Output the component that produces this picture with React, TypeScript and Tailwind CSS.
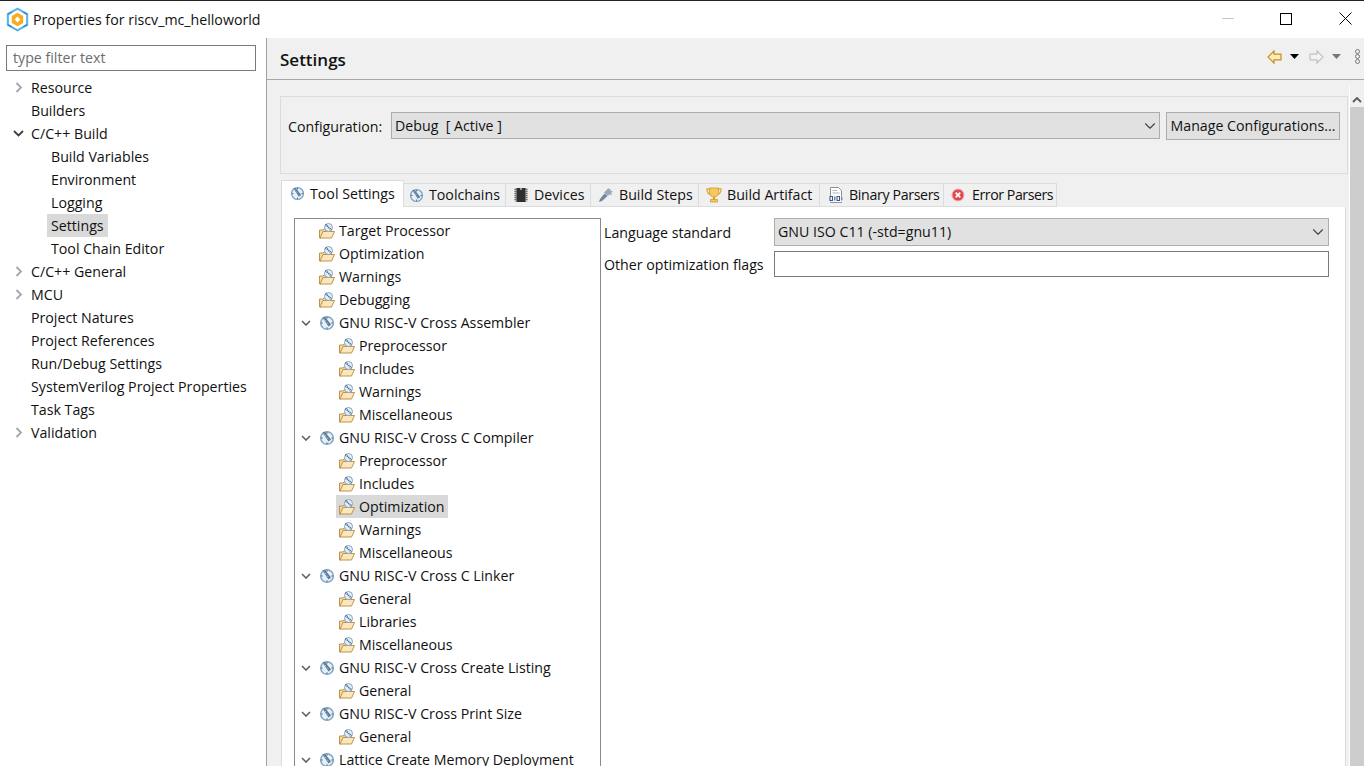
import { ChevronDown } from "lucide-react";

const font = { fontFamily: '"Open Sans", "Noto Sans", sans-serif' };

// 左側のナビゲーション
const navItems = [
  { label: "Resource", indent: 0, arrow: "closed" },
  { label: "Builders", indent: 0 },
  { label: "C/C++ Build", indent: 0, arrow: "open" },
  { label: "Build Variables", indent: 1 },
  { label: "Environment", indent: 1 },
  { label: "Logging", indent: 1 },
  { label: "Settings", indent: 1, selected: true },
  { label: "Tool Chain Editor", indent: 1 },
  { label: "C/C++ General", indent: 0, arrow: "closed" },
  { label: "MCU", indent: 0, arrow: "closed" },
  { label: "Project Natures", indent: 0 },
  { label: "Project References", indent: 0 },
  { label: "Run/Debug Settings", indent: 0 },
  { label: "SystemVerilog Project Properties", indent: 0 },
  { label: "Task Tags", indent: 0 },
  { label: "Validation", indent: 0, arrow: "closed" },
];

// ツール設定のツリー
const toolTree = [
  { label: "Target Processor", level: 0 },
  { label: "Optimization", level: 0 },
  { label: "Warnings", level: 0 },
  { label: "Debugging", level: 0 },
  { label: "GNU RISC-V Cross Assembler", level: 0, group: true },
  { label: "Preprocessor", level: 1 },
  { label: "Includes", level: 1 },
  { label: "Warnings", level: 1 },
  { label: "Miscellaneous", level: 1 },
  { label: "GNU RISC-V Cross C Compiler", level: 0, group: true },
  { label: "Preprocessor", level: 1 },
  { label: "Includes", level: 1 },
  { label: "Optimization", level: 1, selected: true },
  { label: "Warnings", level: 1 },
  { label: "Miscellaneous", level: 1 },
  { label: "GNU RISC-V Cross C Linker", level: 0, group: true },
  { label: "General", level: 1 },
  { label: "Libraries", level: 1 },
  { label: "Miscellaneous", level: 1 },
  { label: "GNU RISC-V Cross Create Listing", level: 0, group: true },
  { label: "General", level: 1 },
  { label: "GNU RISC-V Cross Print Size", level: 0, group: true },
  { label: "General", level: 1 },
  { label: "Lattice Create Memory Deployment", level: 0, group: true },
];

function AppLogo() {
  return (
    <svg width="25" height="25" viewBox="0 0 22 22" className="shrink-0">
      <path d="M11 1.500 19.500 6.200v9.600L11 20.500 2.500 15.800V6.200z" fill="#fff" stroke="#54b4ea" strokeWidth="1.800" />
      <path d="M6 4.500 2.500 6.500M16 4.500l3.500 2M6 17.500l-3.500-2M16 17.500l3.500-2" stroke="#2f8fd0" strokeWidth="1.400" />
      <path d="M11 5 16 8v6l-5 3-5-3V8z" fill="#f9ac1e" />
      <path d="M11 8.300 13.500 11 11 13.700 8.500 11z" fill="#fff" />
    </svg>
  );
}

function ToolIcon({ size = 16 }: { size?: number }) {
  return (
    <svg width={size} height={size} viewBox="0 0 16 16" className="shrink-0">
      <circle cx="8" cy="8" r="6.300" fill="#e8f0f7" stroke="#7fa6c6" strokeWidth="1.500" />
      <path d="M8 1.800v2M14.200 8h-2M8 14.200v-2M1.800 8h2" stroke="#4f7ea6" strokeWidth="1" />
      <path d="M3.500 2.500 6 2l6 7.500-2.500 2z" fill="#58748f" />
      <path d="M5 3.500 10 10" stroke="#e8f0f7" strokeWidth=".8" strokeDasharray="1 1" />
    </svg>
  );
}

function FolderIcon() {
  return (
    <svg width="16" height="16" viewBox="0 0 16 16" className="shrink-0">
      <path d="M.5 7h3.500l1-1h4.500v3H4.500L2 15H.5z" fill="#f4d9a2" stroke="#b98a3e" strokeWidth=".9" />
      <path d="M4 8.500h11.500L12.500 15H1z" fill="#fce7ba" stroke="#b98a3e" strokeWidth=".9" />
      <circle cx="9.500" cy="4.500" r="4" fill="#e8f0f7" stroke="#7fa6c6" strokeWidth="1" />
      <path d="M6.500 1.500 12.500 7" stroke="#4e6d8c" strokeWidth="1.800" strokeDasharray="1.200 .7" />
    </svg>
  );
}

function ChipIcon() {
  return (
    <svg width="16" height="16" viewBox="0 0 16 16" className="shrink-0">
      <rect x="1.500" y="1" width="13" height="14" fill="#c4c4c4" />
      <rect x="3.500" y="1" width="9" height="14" fill="#2f2f2f" />
      <path d="M2.500 2v12M13.500 2v12" stroke="#6b6b6b" strokeWidth="2" strokeDasharray="1 1" />
      <rect x="7" y="1" width="2" height="2" fill="#9a9a9a" />
    </svg>
  );
}

function HammerIcon() {
  return (
    <svg width="16" height="16" viewBox="0 0 16 16" className="shrink-0">
      <path d="M1 15 2 12l4.500-5.500 3 2.500L4 14z" fill="#73879c" />
      <path d="M6 5.500 10.500 1l1 1.500 1.500-.5-.5 2 2.500.5-2 1.500 1 2-3-.5-1 1.500z" fill="#94a9bf" />
    </svg>
  );
}

function TrophyIcon() {
  return (
    <svg width="16" height="16" viewBox="0 0 16 16" className="shrink-0">
      <path d="M3.500 2H1c0 3.500 1.200 5 3.500 5.500M12.500 2H15c0 3.500-1.200 5-3.500 5.500" fill="none" stroke="#e0a93a" strokeWidth="1.300" />
      <path d="M3.500 1h9v4.500c0 2.700-2 4.500-4.500 4.500S3.500 8.200 3.500 5.500z" fill="#f7c95a" stroke="#d09a2a" strokeWidth=".8" />
      <path d="M7 10h2v2.500H7z" fill="#d9a21f" />
      <path d="M4.500 12.500h7V15h-7z" fill="#f7c95a" stroke="#d09a2a" strokeWidth=".8" />
    </svg>
  );
}

function BinaryIcon() {
  return (
    <svg width="16" height="16" viewBox="0 0 16 16" className="shrink-0">
      <path d="M2.500 .5h8l3 3v12h-11z" fill="#fff" stroke="#8d8f9c" strokeWidth="1" />
      <path d="M4.500 3.500h4.500M4.500 6h7" stroke="#a8b6c9" strokeWidth="1" />
      <rect x="1" y="9" width="14" height="5.500" fill="#fff" />
      <path d="M2 9.500h2.500v4H2zM6.800 9.500v4M9 9.500h2.500v4H9zM13.800 9.500v4" fill="none" stroke="#3c5a86" strokeWidth="1.100" />
    </svg>
  );
}

function ErrorIcon() {
  return (
    <svg width="14" height="14" viewBox="0 0 14 14" className="shrink-0">
      <circle cx="7" cy="7" r="6" fill="#e2474f" stroke="#f2aeb1" strokeWidth="1" />
      <path d="M4.700 4.700 9.300 9.300M9.300 4.700 4.700 9.300" stroke="#fff" strokeWidth="1.700" />
    </svg>
  );
}

function BackArrow() {
  return (
    <svg width="15" height="14" viewBox="0 0 15 14">
      <path d="M7 1 1 7l6 6V9.800h7V4.200H7z" fill="#fdeeb5" stroke="#c98a22" strokeWidth="1.200" />
    </svg>
  );
}

function ForwardArrow() {
  return (
    <svg width="15" height="14" viewBox="0 0 15 14">
      <path d="M8 1l6 6-6 6V9.800H1V4.200h7z" fill="#f4f4f4" stroke="#c2c2c2" strokeWidth="1.200" />
    </svg>
  );
}

function Caret({ color }: { color: string }) {
  return (
    <svg width="9" height="5" viewBox="0 0 9 5" className="block">
      <path d="M0 0h9L4.500 5z" fill={color} />
    </svg>
  );
}

const tabs = [
  { label: "Toolchains", icon: <ToolIcon size={15} />, cls: "w-[102px] pl-[5px] gap-[5px]" },
  { label: "Devices", icon: <ChipIcon />, cls: "w-[85px] pl-[7px] gap-[5px]" },
  { label: "Build Steps", icon: <HammerIcon />, cls: "w-[108px] pl-[7px] gap-[5px]" },
  { label: "Build Artifact", icon: <TrophyIcon />, cls: "w-[121px] pl-[7px] gap-[5px]" },
  { label: "Binary Parsers", icon: <BinaryIcon />, cls: "w-[124px] pl-[8px] gap-[5px] tracking-[-0.35px]" },
  { label: "Error Parsers", icon: <ErrorIcon />, cls: "w-[113px] pl-[7px] gap-[7px] tracking-[-0.45px]" },
];

export default function App() {
  return (
    <div
      className="flex h-[766px] w-[1364px] flex-col overflow-hidden border-t border-[#222] bg-white text-[14.200px] text-[#111]"
      style={font}
    >
      {/* タイトルバー */}
      <div className="flex h-[37px] shrink-0 items-center">
        <div className="ml-[5px] flex items-center gap-[3px]">
          <AppLogo />
          <span>Properties for riscv_mc_helloworld</span>
        </div>
        <div className="ml-auto flex items-center pb-[2px]">
          <div className="mr-[46px] h-px w-3 bg-[#c8c8c8]" />
          <div className="mr-[47px] h-[12px] w-[12px] border border-black" />
          <svg width="13" height="13" viewBox="0 0 13 13" className="mr-[12px]">
            <path d="M.5.5l12 12M12.500.5l-12 12" stroke="#000" strokeWidth="1" />
          </svg>
        </div>
      </div>

      <div className="flex min-h-0 flex-1">
        {/* 左ペイン */}
        <aside className="w-[267px] shrink-0 border-r border-[#a0a0a0] pl-[6px] pr-[10px] pt-[7px]">
          <div className="flex h-[26px] items-center border border-[#7a7a7a] pl-[6px] text-[#6d6d6d]">
            type filter text
          </div>
          <div className="mt-[5px]">
            {navItems.map((item) => (
              <div key={item.label} className="relative flex h-[23px] items-center">
                {item.arrow === "closed" && (
                  <svg width="8" height="11" viewBox="0 0 8 11" className="absolute left-[9px]">
                    <path d="M1.500 1 6 5.500 1.500 10" fill="none" stroke="#a6a6a6" strokeWidth="1.800" />
                  </svg>
                )}
                {item.arrow === "open" && (
                  <svg width="11" height="7" viewBox="0 0 11 7" className="absolute left-[7px]">
                    <path d="M1 1l4.500 4.500L10 1" fill="none" stroke="#404040" strokeWidth="1.800" />
                  </svg>
                )}
                {item.selected ? (
                  <span className="ml-[41px] bg-[#d9d9d9] px-[4px] leading-[23px]">{item.label}</span>
                ) : (
                  <span className={item.indent ? "ml-[45px]" : "ml-[25px]"}>{item.label}</span>
                )}
              </div>
            ))}
          </div>
        </aside>

        {/* 右ペイン */}
        <main className="flex min-w-0 flex-1 flex-col bg-[#f0f0f0]">
          <header className="flex h-[42px] shrink-0 items-center border-b border-[#a8a8a8] pl-[13px]">
            <span className="pt-[3px] text-[17px] font-semibold">Settings</span>
            <div className="ml-auto flex items-center pb-[4px]">
              <BackArrow />
              <span className="ml-[8px]">
                <Caret color="#000" />
              </span>
              <span className="ml-[10px]">
                <ForwardArrow />
              </span>
              <span className="ml-[8px]">
                <Caret color="#777" />
              </span>
              <div className="ml-[14px] mr-[4px] flex flex-col">
                <span className="h-[5px] w-[5px] rounded-full border border-[#777]" />
                <span className="h-[5px] w-[5px] rounded-full border border-[#777]" />
                <span className="h-[5px] w-[5px] rounded-full border border-[#777]" />
              </div>
            </div>
          </header>

          <div className="flex min-h-0 flex-1">
            <div className="min-w-0 flex-1 pl-[13px] pt-[16px]">
              {/* Configuration */}
              <div className="flex h-[78px] items-start border border-[#dcdcdc] pl-[7px] pt-[15px]">
                <span className="mt-[4px] w-[103px] shrink-0">Configuration:</span>
                <div className="flex h-[27px] w-[769px] shrink-0 items-center justify-between border border-[#adadad] bg-[#e1e1e1] pl-[3px]">
                  <span className="whitespace-pre">Debug  [ Active ]</span>
                  <ChevronDown size={18} strokeWidth={1.5} className="text-[#444]" />
                </div>
                <div className="ml-[6px] flex h-[28px] w-[174px] shrink-0 items-center justify-center whitespace-nowrap border border-[#adadad] bg-[#e1e1e1]">
                  Manage Configurations...
                </div>
              </div>

              {/* タブ */}
              <div className="ml-px mt-[6px] flex h-[27px] items-end">
                <div className="z-10 flex h-[27px] w-[123px] items-center gap-[5px] border border-b-0 border-[#dcdcdc] bg-white pb-[1px] pl-[8px]">
                  <ToolIcon size={15} />
                  <span>Tool Settings</span>
                </div>
                {tabs.map((tab) => (
                  <div
                    key={tab.label}
                    className={`flex h-[24px] shrink-0 items-center whitespace-nowrap border-b border-r border-t border-[#dcdcdc] ${tab.cls}`}
                  >
                    {tab.icon}
                    <span>{tab.label}</span>
                  </div>
                ))}
              </div>

              {/* タブの中身 */}
              <div className="ml-px mr-[2px] flex h-[600px] items-start border border-t-0 border-[#dcdcdc] bg-white pl-[12px] pt-[11px]">
                <div className="h-[600px] w-[307px] shrink-0 border border-[#8a8a8a]">
                  {toolTree.map((row, i) => (
                    <div key={i} className="relative flex h-[23px] items-center">
                      {row.group && (
                        <svg width="10" height="6" viewBox="0 0 10 6" className="absolute left-[6px]">
                          <path d="M1 1l4 4 4-4" fill="none" stroke="#606060" strokeWidth="1.600" />
                        </svg>
                      )}
                      <div
                        className={`flex h-[23px] items-center gap-[4px] whitespace-nowrap pl-[3px] pr-[4px] ${
                          row.level ? "ml-[41px]" : "ml-[21px]"
                        } ${row.selected ? "bg-[#d9d9d9]" : ""}`}
                      >
                        {row.group ? <ToolIcon /> : <FolderIcon />}
                        <span>{row.label}</span>
                      </div>
                    </div>
                  ))}
                </div>
                <div className="ml-[3px] min-w-0 flex-1 pr-[16px]">
                  <div className="flex h-[28px] items-center">
                    <span className="w-[170px] shrink-0 pt-[2px]">Language standard</span>
                    <div className="flex h-[28px] flex-1 items-center justify-between border border-[#adadad] bg-[#e1e1e1] pb-[1px] pl-[3px] pr-[1px]">
                      <span>GNU ISO C11 (-std=gnu11)</span>
                      <ChevronDown size={18} strokeWidth={1.5} className="text-[#444]" />
                    </div>
                  </div>
                  <div className="mt-[5px] flex h-[26px] items-center">
                    <span className="w-[170px] shrink-0 pt-[1px]">Other optimization flags</span>
                    <div className="h-[26px] flex-1 border border-[#7a7a7a] bg-white" />
                  </div>
                </div>
              </div>
            </div>

            {/* スクロールバー */}
            <div className="ml-px mt-[6px] flex w-[15px] shrink-0 flex-col border-l border-white">
              <div className="flex h-[21px] shrink-0 items-end justify-center pb-[4px]">
                <svg width="10" height="6" viewBox="0 0 10 6">
                  <path d="M1 5l4-4 4 4" fill="none" stroke="#5a5a5a" strokeWidth="1.800" />
                </svg>
              </div>
              <div className="flex-1 bg-[#cdcdcd]" />
            </div>
          </div>
        </main>
      </div>
    </div>
  );
}
